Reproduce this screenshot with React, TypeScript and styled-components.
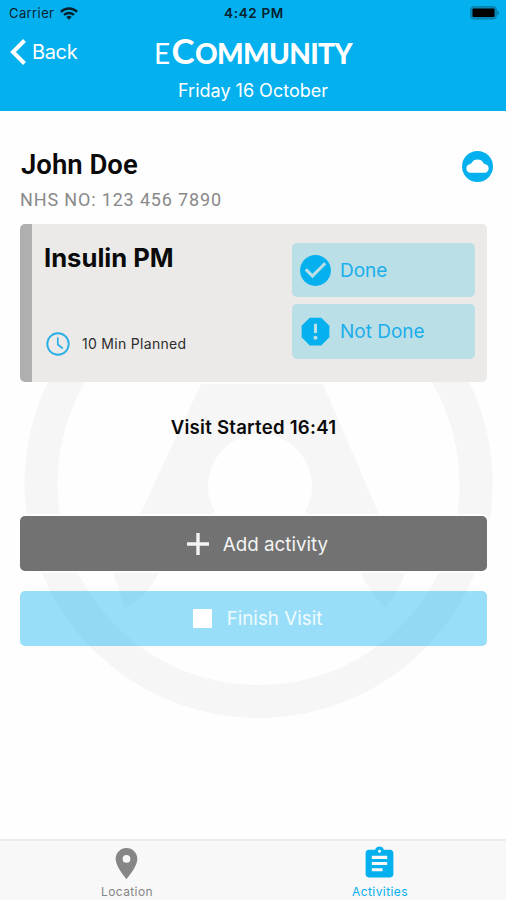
import React from "react";
import styled, { createGlobalStyle } from "styled-components";
import {
  MdAssignment,
  MdCheckCircle,
  MdLocationOn,
  MdReport,
} from "react-icons/md";

const BLUE = "#04b0ee";

const GlobalStyle = createGlobalStyle`
  *, *::before, *::after { box-sizing: border-box; }
  body { margin: 0; background: #fefefe; }
`;

const Screen = styled.div`
  position: relative;
  display: flex;
  flex-direction: column;
  width: 506px;
  height: 900px;
  overflow: hidden;
  background: #fefefe;
  color: #0a0a0a;
  font-family: Inter, "Liberation Sans", sans-serif;
`;

const Header = styled.header`
  display: flex;
  flex-direction: column;
  height: 111px;
  background: ${BLUE};
  color: #fff;
`;

const StatusBar = styled.div`
  display: grid;
  grid-template-columns: 1fr auto 1fr;
  align-items: center;
  height: 26px;
  padding: 0 7px 0 9px;
  color: #06222e;
  font-size: 13px;
`;

const Carrier = styled.div`
  display: flex;
  align-items: center;
  gap: 6px;
  letter-spacing: 0.4px;
`;

const Clock = styled.div`
  font-size: 13.5px;
  font-weight: 600;
  letter-spacing: 0.65px;
`;

const Battery = styled.div`
  display: flex;
  justify-content: flex-end;
`;

const TitleRow = styled.div`
  display: grid;
  grid-template-columns: 1fr auto 1fr;
  align-items: center;
  height: 50px;
  padding: 0 10px;
`;

const BackButton = styled.button`
  display: flex;
  align-items: center;
  gap: 6px;
  padding: 1px 0 0;
  border: 0;
  background: none;
  color: #fff;
  font: 400 20px Inter, sans-serif;
  letter-spacing: -0.35px;
`;

const Brand = styled.h1`
  display: flex;
  align-items: baseline;
  margin: 0;
  font: 900 28px/40px Lato, sans-serif;
  letter-spacing: -0.65px;
`;

const BrandPrefix = styled.span`
  margin-right: 2px;
  font-weight: 400;
`;

const BrandCapital = styled.span`
  margin-right: 1px;
  font-size: 35px;
  font-weight: 700;
`;

const DateLine = styled.div`
  height: 30px;
  text-align: center;
  font-size: 18px;
  line-height: 30px;
`;

const Watermark = styled.svg`
  position: absolute;
  left: 0;
  top: 240px;
  pointer-events: none;
`;

const Content = styled.main`
  position: relative;
  display: flex;
  flex: 1;
  flex-direction: column;
  padding: 37px 19px 0 20px;
`;

const Patient = styled.section`
  display: flex;
  justify-content: space-between;
  height: 76px;
  margin-right: -6px;
  font-family: Roboto, sans-serif;
`;

const PatientName = styled.h2`
  margin: 0 0 0 1px;
  font-size: 27.5px;
  font-weight: 600;
  line-height: 34px;
`;

const NhsNumber = styled.div`
  margin-top: 8px;
  color: #898989;
  font-size: 18px;
  line-height: 20px;
  letter-spacing: 0.85px;
`;

const CloudStatus = styled.div`
  padding-top: 3px;
`;

const Card = styled.section`
  display: flex;
  justify-content: space-between;
  height: 158px;
  padding: 18.5px 12px 0;
  border-left: 12px solid #afafaf;
  border-radius: 5px;
  background: #ebeae8;
`;

const CardInfo = styled.div`
  display: flex;
  flex-direction: column;
  justify-content: space-between;
  padding-bottom: 26px;
`;

const ActivityName = styled.h3`
  margin: -1px 0 0;
  font-size: 25.6px;
  font-weight: 700;
  line-height: 32px;
`;

const Planned = styled.div`
  display: flex;
  align-items: center;
  gap: 12px;
  padding-left: 2px;
  color: #2d2d2d;
  font-size: 14px;
  letter-spacing: 0.3px;
`;

const PlannedText = styled.span`
  margin-top: -2px;
`;

const Choices = styled.div`
  display: flex;
  flex-direction: column;
  gap: 7px;
  width: 183.5px;
`;

const Choice = styled.button`
  display: flex;
  align-items: center;
  gap: 6px;
  height: 54.5px;
  padding: 1px 6px 0 5.5px;
  border: 0;
  border-radius: 5px;
  background: #bbdfe7;
  color: #1aaeeb;
  font: 400 19px Inter, sans-serif;

  svg { color: ${BLUE}; }
`;

const VisitStatus = styled.p`
  margin: 32px 0 76px;
  font-size: 18.6px;
  font-weight: 600;
  line-height: 26px;
  letter-spacing: 0.25px;
  text-align: center;
`;

const ActionButton = styled.button<{ $tone: "dark" | "light" }>`
  display: flex;
  flex-shrink: 0;
  align-items: center;
  justify-content: center;
  gap: ${(p) => (p.$tone === "dark" ? "14px" : "15px")};
  height: 55px;
  margin-bottom: 20px;
  padding: ${(p) => (p.$tone === "dark" ? "1px" : "0")} 0 0 8px;
  border: 0;
  border-radius: 5px;
  background: ${(p) => (p.$tone === "dark" ? "#727272" : "rgba(0, 174, 239, 0.4)")};
  box-shadow: ${(p) => (p.$tone === "dark" ? "0 0 0 2px #fefefe" : "none")};
  color: ${(p) => (p.$tone === "dark" ? "#f4f4f4" : "#f0fbff")};
  font: 400 18.8px Inter, sans-serif;
`;

const StopSquare = styled.span`
  width: 19px;
  height: 19px;
  margin-top: -1px;
  border-radius: 1px;
  background: #fff;
`;

const TabBar = styled.nav`
  position: relative;
  display: grid;
  grid-template-columns: 1fr 1fr;
  height: 61px;
  border-top: 2px solid #ececec;
  background: #f8f8f8;
`;

const Tab = styled.div<{ $active?: boolean }>`
  display: flex;
  flex-direction: column;
  align-items: center;
  padding-top: 4px;
  color: ${(p) => (p.$active ? BLUE : "#868686")};
  font-size: 12px;
  line-height: 16px;
  letter-spacing: 0.4px;
`;

const TabLabel = styled.span`
  margin: 2px 0 0 1px;
`;

const WifiIcon = () => (
  <svg width="18" height="13" viewBox="0 0 18 13" fill="none" stroke="#06222e">
    <path d="M.9 4.8a11.6 11.6 0 0 1 16.2 0" strokeWidth="2.4" />
    <path d="M4 8a7.2 7.2 0 0 1 10 0" strokeWidth="2.3" />
    <path d="M9 12.7 6.3 10a3.9 3.9 0 0 1 5.4 0Z" fill="#06222e" stroke="none" />
  </svg>
);

const BatteryIcon = () => (
  <svg width="29" height="14" viewBox="0 0 29 14">
    <rect x=".6" y=".6" width="25.8" height="12.4" rx="3.2" fill="#0989b9" stroke="#087da8" />
    <rect x="2.5" y="2.6" width="22" height="8.4" rx="1" fill="#000" />
    <path d="M27.4 4.6q1.6.7 1.6 2.3t-1.6 2.3Z" fill="#087da8" />
  </svg>
);

const ChevronIcon = () => (
  <svg width="16" height="26" viewBox="0 0 16 26" fill="none" stroke="#fff" strokeWidth="4">
    <path d="M14.5 1.5 3 13l11.5 11.5" />
  </svg>
);

const CloudIcon = () => (
  <svg width="31" height="31" viewBox="0 0 31 31">
    <circle cx="15.5" cy="15.5" r="15.5" fill={BLUE} />
    <path
      fill="#fff"
      d="M8.4 21.8a4.3 4.3 0 0 1-.6-8.5c.7-.1 1.2-.3 1.7-1.2a6.9 6.9 0 0 1 12 0c.5.9 1 1.1 1.7 1.2a4.3 4.3 0 0 1-.6 8.5Z"
    />
  </svg>
);

const ClockIcon = () => (
  <svg width="24" height="24" viewBox="0 0 24 24" fill="none" stroke="#2aaee6">
    <circle cx="12" cy="12" r="10.7" strokeWidth="1.9" />
    <path d="M11.8 5.5v7l5 4" strokeWidth="1.7" />
  </svg>
);

const PlusIcon = () => (
  <svg width="22" height="22" viewBox="0 0 22 22" stroke="#f4f4f4" strokeWidth="3.4">
    <path d="M11 0v22M0 11h22" />
  </svg>
);

export default function App() {
  return (
    <>
      <GlobalStyle />
      <Screen>
        <Watermark width="506" height="490" viewBox="0 240 506 490">
          <circle cx="258.5" cy="484" r="217.5" fill="none" stroke="#f6f6f6" strokeWidth="33" />
          <path
            fill="#f6f6f6"
            d="M201 384 141 512 113 574Q121 592 124 608Q148 596 158 574Q174 540 215 512A52 52 0 1 1 305 512Q346 540 361 574Q374 599 386 608Q397 594 405 574L378 512 323 384Z"
          />
        </Watermark>
        <Header>
          <StatusBar>
            <Carrier>
              Carrier
              <WifiIcon />
            </Carrier>
            <Clock>4:42 PM</Clock>
            <Battery>
              <BatteryIcon />
            </Battery>
          </StatusBar>
          <TitleRow>
            <BackButton>
              <ChevronIcon />
              Back
            </BackButton>
            <Brand>
              <BrandPrefix>E</BrandPrefix>
              <BrandCapital>C</BrandCapital>
              OMMUNITY
            </Brand>
          </TitleRow>
          <DateLine>Friday 16 October</DateLine>
        </Header>
        <Content>
          <Patient>
            <div>
              <PatientName>John Doe</PatientName>
              <NhsNumber>NHS NO: 123 456 7890</NhsNumber>
            </div>
            <CloudStatus>
              <CloudIcon />
            </CloudStatus>
          </Patient>
          <Card>
            <CardInfo>
              <ActivityName>Insulin PM</ActivityName>
              <Planned>
                <ClockIcon />
                <PlannedText>10 Min Planned</PlannedText>
              </Planned>
            </CardInfo>
            <Choices>
              <Choice>
                <MdCheckCircle size={37} />
                Done
              </Choice>
              <Choice>
                <MdReport size={37} />
                Not Done
              </Choice>
            </Choices>
          </Card>
          <VisitStatus>Visit Started 16:41</VisitStatus>
          <ActionButton $tone="dark">
            <PlusIcon />
            Add activity
          </ActionButton>
          <ActionButton $tone="light">
            <StopSquare />
            Finish Visit
          </ActionButton>
        </Content>
        <TabBar>
          <Tab>
            <MdLocationOn size={37} />
            <TabLabel>Location</TabLabel>
          </Tab>
          <Tab $active>
            <MdAssignment size={37} />
            <TabLabel>Activities</TabLabel>
          </Tab>
        </TabBar>
      </Screen>
    </>
  );
}
